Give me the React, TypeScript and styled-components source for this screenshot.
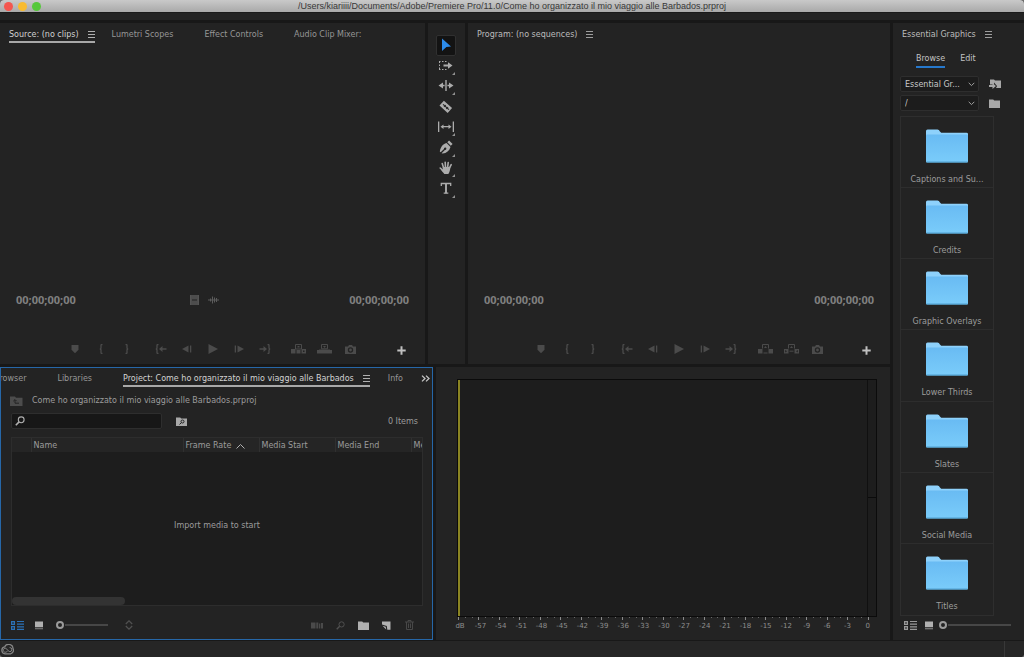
import React from 'react';
import styled, { createGlobalStyle, css } from 'styled-components';

const GlobalStyle = createGlobalStyle`
  *, *::before, *::after { box-sizing: border-box; }
  body {
    margin: 0;
    background: #6b6b6b;
    color: #9c9c9c;
    font-family: 'DejaVu Sans', sans-serif;
    font-size: 8px;
    font-weight: 400;
    line-height: 12px;
  }
  button, input, select { font: inherit; color: inherit; }
  svg { display: block; flex: none; }
`;

const Window = styled.div`
  display: flex;
  flex-direction: column;
  min-height: 100vh;
  background: #181818;
  border-radius: 4px;
  overflow: hidden;
`;

const TitleBar = styled.header`
  display: grid;
  grid-template-columns: 1fr auto 1fr;
  align-items: center;
  height: 12px;
  padding: 0 4px;
  background: linear-gradient(#c9c9c9, #a9a9a9);
  color: #383838;
`;

const Lights = styled.div`
  display: flex;
  gap: 5px;
`;

const Light = styled.button<{ $color: string }>`
  width: 9px;
  height: 9px;
  padding: 0;
  border: 0;
  border-radius: 50%;
  background: ${(p) => p.$color};
`;

const Title = styled.h1`
  margin: 0;
  font-family: 'Liberation Sans', sans-serif;
  font-size: 9px;
  font-weight: 400;
  line-height: 12px;
`;

const Strip = styled.div`
  height: 8px;
  margin-bottom: 3px;
  background: #232323;
  border-top: 1px solid #1a1a1a;
`;

const Workspace = styled.main`
  flex: 1;
  display: grid;
  grid-template-columns: 1fr 131px;
  gap: 3px;
  min-height: 0;
`;

const Area = styled.div`
  display: grid;
  grid-template-rows: 341fr 273fr;
  gap: 3px;
  min-width: 0;
`;

const TopRow = styled.div`
  display: grid;
  grid-template-columns: 425fr 37px 422fr;
  gap: 3px;
`;

const BottomRow = styled.div`
  display: grid;
  grid-template-columns: 433fr 454fr;
  gap: 3px;
`;

const Panel = styled.section`
  display: flex;
  flex-direction: column;
  min-width: 0;
  background: #232323;
`;

const TabBar = styled.nav`
  display: flex;
  gap: 16px;
  padding: 4px 9px 0;
`;

const Tab = styled.button<{ $active?: boolean }>`
  display: flex;
  align-items: center;
  gap: 9px;
  height: 16px;
  padding: 1px 0 0;
  border: 0;
  border-bottom: 2px solid ${(p) => (p.$active ? '#a8a8a8' : 'transparent')};
  background: none;
  color: ${(p) => (p.$active ? '#d2d2d2' : '#969696')};
  white-space: nowrap;
`;

const TitleTab = styled(Tab)`
  color: #bcbcbc;
`;

const SourceTabs = styled(TabBar)`
  gap: 31px;
  & > :first-child { margin-right: -14px; }
`;

const Stage = styled.div`
  flex: 1;
`;

const TimeRow = styled.div`
  display: flex;
  align-items: center;
  justify-content: space-between;
  height: 20px;
  padding: 0 16px;
  margin-bottom: 27px;
`;

const TimeCode = styled.span`
  color: #808080;
  font-family: 'Noto Sans', sans-serif;
  font-size: 11px;
  font-weight: 700;
  line-height: 20px;
`;

const DragIcons = styled.div`
  display: flex;
  align-items: center;
  gap: 9px;
  padding-right: 16px;
  color: #5c5c5c;
`;

const Transport = styled.div`
  display: grid;
  grid-template-columns: 1fr auto 1fr;
  align-items: center;
  height: 24px;
  margin-bottom: 3px;
  color: #4b4b4b;
`;

const TransportButtons = styled.div`
  grid-column: 2;
  display: flex;
  gap: 10px;
`;

const ButtonGroup = styled.div`
  display: flex;
  gap: 2px;
`;

const IconButton = styled.button<{ $w?: number; $color?: string }>`
  display: flex;
  align-items: center;
  justify-content: center;
  width: ${(p) => p.$w ?? 24}px;
  height: 18px;
  padding: 0;
  border: 0;
  background: none;
  color: ${(p) => p.$color ?? 'inherit'};
`;

const AddSlot = styled.div`
  display: flex;
  justify-content: flex-end;
  padding: 3px 12px 0 0;
`;

const ToolPanel = styled(Panel)`
  align-items: center;
  padding: 12px 1px 0 0;
`;

const ToolList = styled.div`
  display: grid;
  grid-auto-rows: 1fr;
  width: 20px;
  height: 164px;
`;

const Tool = styled.button<{ $active?: boolean }>`
  display: flex;
  align-items: center;
  justify-content: center;
  width: 20px;
  padding: 0;
  border: 1px solid ${(p) => (p.$active ? '#303030' : 'transparent')};
  border-radius: 2px;
  background: ${(p) => (p.$active ? '#131313' : 'none')};
  color: ${(p) => (p.$active ? '#2d8ceb' : '#acacac')};
`;

const ProjectPanel = styled(Panel)`
  border: 1px solid #2667a8;
`;

const ProjectTabs = styled.div`
  display: flex;
  align-items: flex-start;
  justify-content: space-between;
  height: 20px;
  padding: 3px 2px 0 0;
  overflow: hidden;
`;

const ProjectTabList = styled.nav`
  display: flex;
  gap: 31px;
  margin-left: -7px;
  & > :last-child { margin-left: -13px; }
`;

const MorePanels = styled.button`
  display: flex;
  align-items: center;
  height: 14px;
  padding: 0;
  border: 0;
  background: none;
  color: #c4c4c4;
`;

const Crumb = styled.div`
  display: flex;
  align-items: center;
  gap: 9px;
  height: 14px;
  margin-top: 6px;
  padding: 0 9px;
`;

const SearchRow = styled.div`
  display: flex;
  align-items: center;
  gap: 12px;
  height: 16px;
  margin-top: 5px;
  padding: 0 14px 0 10px;
`;

const fieldBox = css`
  border: 1px solid #2e2e2e;
  border-radius: 2px;
  background: #171717;
`;

const SearchBox = styled.label`
  ${fieldBox}
  display: flex;
  align-items: center;
  gap: 4px;
  width: 151px;
  height: 16px;
  padding: 0 3px;
  color: #b0b0b0;
`;

const SearchInput = styled.input`
  flex: 1;
  min-width: 0;
  padding: 0;
  border: 0;
  outline: 0;
  background: none;
`;

const ItemCount = styled.span`
  margin-left: auto;
  padding-top: 2px;
`;

const Bin = styled.div`
  flex: 1;
  display: flex;
  flex-direction: column;
  margin: 8px 9px 0 10px;
  border: 1px solid #2d2d2d;
  background: #1d1d1d;
  overflow: hidden;
`;

const BinTable = styled.table`
  width: 100%;
  table-layout: fixed;
  border-collapse: collapse;
  background: #252525;
`;

const Th = styled.th<{ $w?: number }>`
  width: ${(p) => (p.$w ? `${p.$w}px` : 'auto')};
  height: 14px;
  padding: 2px 0 0 2px;
  border-right: 1px solid #303030;
  font-weight: 400;
  text-align: left;
  white-space: nowrap;
  overflow: hidden;
  &:last-child { border-right: 0; }
`;

const SortLabel = styled.span`
  display: flex;
  align-items: center;
  gap: 5px;
`;

const EmptyNote = styled.div`
  flex: 1;
  display: flex;
  align-items: center;
  justify-content: center;
  padding-top: 2px;
`;

const ScrollThumb = styled.div`
  width: 113px;
  height: 8px;
  border-radius: 4px;
  background: #333333;
`;

const Footer = styled.div`
  display: flex;
  align-items: center;
  height: 20px;
  margin: 9px 13px 4px 8px;
`;

const FooterRight = styled.div`
  display: flex;
  gap: 3px;
  margin-left: auto;
`;

const Zoom = styled.input<{ $w: number }>`
  appearance: none;
  width: ${(p) => p.$w}px;
  height: 10px;
  margin: 0 0 0 4px;
  background: linear-gradient(#474747, #474747) right 4px / calc(100% - 9px) 2px no-repeat;
  &::-webkit-slider-thumb {
    appearance: none;
    width: 8px;
    height: 8px;
    border: 2px solid #9b9b9b;
    border-radius: 50%;
    background: transparent;
  }
`;

const MeterPanel = styled(Panel)`
  padding: 12px 13px 0 21px;
`;

const Meter = styled.div`
  flex: 1;
  display: grid;
  grid-template-columns: 1fr 8px;
  border: 1px solid #0b0b0b;
  background: #1d1d1d;
`;

const Level = styled.div`
  border-left: 2px solid #8a8422;
  border-right: 1px solid #101010;
`;

const Clip = styled.div`
  display: grid;
  grid-template-rows: 1fr 1fr;
  & > :first-child { border-bottom: 1px solid #0b0b0b; }
`;

const Ticks = styled.div`
  display: flex;
  justify-content: space-between;
  height: 4px;
  margin: 0 8px 0 1px;
`;

const Tick = styled.span<{ $major: boolean }>`
  width: 1px;
  height: ${(p) => (p.$major ? 3 : 1)}px;
  background: ${(p) => (p.$major ? '#8a8a8a' : '#6a6a6a')};
`;

const Scale = styled.div`
  display: flex;
  justify-content: space-between;
  height: 19px;
  margin: 0 9px 0 3px;
  font-size: 7px;
  line-height: 10px;
  color: #8f8f8f;
`;

const Mark = styled.span`
  display: flex;
  justify-content: center;
  width: 0;
  white-space: nowrap;
`;

const GraphicsBody = styled.div`
  flex: 1;
  display: flex;
  flex-direction: column;
  padding: 9px 13px 0 7px;
`;

const ModeTabs = styled.nav`
  display: flex;
  gap: 15px;
  padding-left: 16px;
`;

const ModeTab = styled.button<{ $active?: boolean }>`
  height: 16px;
  padding: 0;
  border: 0;
  border-bottom: 2px solid ${(p) => (p.$active ? '#2678cc' : 'transparent')};
  background: none;
  color: #c2c2c2;
`;

const Picker = styled.div`
  display: flex;
  align-items: center;
  gap: 10px;
  margin-top: 8px;
  color: #a8a8a8;
  & + & { margin-top: 3px; }
`;

const SelectBox = styled.div`
  ${fieldBox}
  display: grid;
  grid-template-columns: 1fr 10px;
  align-items: center;
  width: 79px;
  height: 16px;
  background: #1c1c1c;
`;

const Select = styled.select`
  appearance: none;
  grid-area: 1 / 1 / 2 / 3;
  width: 100%;
  height: 14px;
  padding: 1px 10px 0 4px;
  border: 0;
  outline: 0;
  background: none;
  color: #c8c8c8;
`;

const SelectArrow = styled.span`
  grid-area: 1 / 2 / 2 / 3;
  pointer-events: none;
`;

const FolderList = styled.ul`
  flex: 1;
  display: grid;
  grid-auto-rows: 1fr;
  width: 94px;
  margin: 5px 0 0;
  padding: 0;
  border: 1px solid #2e2e2e;
  list-style: none;
`;

const FolderItem = styled.li`
  display: flex;
  flex-direction: column;
  align-items: center;
  gap: 11px;
  padding-top: 12px;
  border-bottom: 1px solid #2d2d2d;
  white-space: nowrap;
  &:last-child { border-bottom: 0; }
`;

const GraphicsFooter = styled.div`
  display: flex;
  align-items: center;
  height: 18px;
  margin: 0 0 6px 5px;
`;

const StatusBar = styled.footer`
  display: flex;
  align-items: center;
  justify-content: space-between;
  height: 16px;
  margin-top: 1px;
  padding: 0 19px 0 1px;
  background: #262626;
  color: #858585;
`;

const StatusDivider = styled.span`
  width: 1px;
  height: 16px;
  background: #383838;
`;

/* ---------- icons ---------- */

const Menu = () => (
  <svg width="7" height="7" viewBox="0 0 7 7" fill="currentColor">
    <path d="M0 0h7v1H0zM0 3h7v1H0zM0 6h7v1H0z" opacity=".8" />
  </svg>
);

const Folder = ({ mark }: { mark?: React.ReactNode }) => (
  <svg width="11" height="9" viewBox="0 0 11 9" fill="currentColor">
    <path d="M0 .5h4.200l1 1H11V9H0z" />
    {mark}
  </svg>
);

const Magnifier = ({ size = 10 }: { size?: number }) => (
  <svg width={size} height={size} viewBox="0 0 10 10" fill="none" stroke="currentColor" strokeWidth="1.1">
    <circle cx="6.2" cy="3.8" r="2.9" />
    <path d="M4.1 5.900L.8 9.200" strokeWidth="1.6" />
  </svg>
);

const BigFolder = () => (
  <svg width="42" height="34" viewBox="0 0 42 34">
    <defs>
      <linearGradient id="folderFace" x1="0" y1="0" x2="0" y2="1">
        <stop offset="0" stopColor="#69bbf3" />
        <stop offset="1" stopColor="#7accfa" />
      </linearGradient>
    </defs>
    <path d="M0 2Q0 .5 1.5.5H11.500c2 0 2.500 3.300 4.500 3.300H40.500Q42 3.800 42 5V10H0z" fill="#8ed1fb" />
    <path d="M0 6.500Q0 5.500 1 5.500H41Q42 5.500 42 6.500V32.500Q42 33.500 41 33.500H1Q0 33.500 0 32.500z" fill="url(#folderFace)" />
    <path d="M.5 33H41.500" stroke="#4f9fd0" />
  </svg>
);

const ListView = () => (
  <svg width="13" height="9" viewBox="0 0 13 9" fill="currentColor">
    <path d="M0 0h4v4H0zM1.300 1.300v1.400h1.400V1.300zM0 5h4v4H0zM1.300 6.300v1.400h1.400V6.300z" fillRule="evenodd" />
    <path d="M6 0h7v1H6zM6 2.500h7v1.200H6zM6 5.200h7v1.200H6zM6 7.800h7V9H6z" />
  </svg>
);

const ThumbView = () => (
  <svg width="8" height="9" viewBox="0 0 8 9" fill="currentColor">
    <path d="M0 .5h8v5.700H0z" />
    <path d="M0 7.200h8v1.100H0z" opacity=".7" />
  </svg>
);

const Svg = ({ w = 16, h = 12, children }: { w?: number; h?: number; children: React.ReactNode }) => (
  <svg width={w} height={h} viewBox={`0 0 ${w} ${h}`} fill="currentColor">
    {children}
  </svg>
);

const marker = <Svg w={8} h={10}><path d="M.5 1h7v4.800L4 9.200.5 5.800z" /></Svg>;
const braceL = <Svg w={4} h={10}><path d="M3.500.5H2.800Q2 .5 2 1.400V3.800Q2 5 .8 5 2 5 2 6.200V8.600Q2 9.500 2.800 9.500H3.500" fill="none" stroke="currentColor" strokeWidth="1.300" /></Svg>;
const braceR = <Svg w={4} h={10}><path d="M.5.5H1.200Q2 .5 2 1.400V3.800Q2 5 3.200 5 2 5 2 6.200V8.600Q2 9.500 1.200 9.500H.5" fill="none" stroke="currentColor" strokeWidth="1.300" /></Svg>;
const goIn = (
  <Svg w={12} h={10}>
    <path d="M3.500.5H2.800Q2 .5 2 1.400V3.800Q2 5 .8 5 2 5 2 6.200V8.600Q2 9.500 2.800 9.500H3.500" fill="none" stroke="currentColor" strokeWidth="1.300" />
    <path d="M4 5l3.500-3v2.200H11.500v1.600H7.500V8z" />
  </Svg>
);
const goOut = (
  <Svg w={12} h={10}>
    <path d="M8.500.5H9.200Q10 .5 10 1.400V3.800Q10 5 11.200 5 10 5 10 6.200V8.600Q10 9.500 9.200 9.500H8.500" fill="none" stroke="currentColor" strokeWidth="1.300" />
    <path d="M8 5L4.500 2v2.200H.5v1.600h4V8z" />
  </Svg>
);
const stepBack = <Svg w={10} h={8}><path d="M0 4l6.500-3.500v7zM8 .5h1.300v7H8z" /></Svg>;
const play = <Svg w={10} h={10}><path d="M.5 0L10 5 .5 10z" /></Svg>;
const stepFwd = <Svg w={10} h={8}><path d="M10 4L3.500.5v7zM.7.5H2v7H.7z" /></Svg>;
const insert = (
  <Svg w={15} h={10}>
    <path d="M0 5h4.500v4.500H0z" />
    <path d="M4.500.5h6V5h-6z" fill="none" stroke="currentColor" />
    <path d="M6.500 2h2v1.500h-2zM5.500 6h4v3.500h-4zM10.500 5H15v4.500h-4.500zM12 6.500V8h1.500V6.500z" fillRule="evenodd" />
  </Svg>
);
const overwrite = (
  <Svg w={15} h={10}>
    <path d="M0 6h15v3.500H0z" />
    <path d="M4.500.5h6V4.800h-6z" fill="none" stroke="currentColor" />
    <path d="M6 2h3L7.500 4zM2 5h11v.6H2z" />
  </Svg>
);
const lift = (
  <Svg w={15} h={10}>
    <path d="M0 5h4.500v4.500H0zM10.500 5H15v4.500h-4.500z" />
    <path d="M4.500 4.500v-4h6v4" fill="none" stroke="currentColor" />
    <path d="M6 4l1.500-2L9 4zM5.500 8.500h4v1h-4z" />
  </Svg>
);
const extract = (
  <Svg w={15} h={10}>
    <path d="M0 5h4.500v4.500H0zM1.200 6v2.500L3 7.200zM10.500 5H15v4.500h-4.500zM13.800 6L12 7.200l1.800 1.300z" fillRule="evenodd" />
    <path d="M4.500 4.500v-4h6v4M5.500 7.200h4" fill="none" stroke="currentColor" />
    <path d="M6 4l1.500-2L9 4z" />
  </Svg>
);
const camera = (
  <Svg w={11} h={9}>
    <path d="M0 1.500h3L4 0h3l1 1.500h3V9H0zM5.500 2.300a2.700 2.700 0 100 5.400 2.700 2.700 0 000-5.400zM5.500 3.600a1.400 1.400 0 110 2.800 1.400 1.400 0 010-2.800z" fillRule="evenodd" />
  </Svg>
);
const plus = <Svg w={9} h={9}><path d="M3.500.3h2v3.200h3.200v2H5.500v3.200h-2V5.500H.3v-2h3.200z" /></Svg>;

const corner = <path d="M18 15v3h-3z" opacity=".8" />;
const ToolSvg = ({ children }: { children: React.ReactNode }) => (
  <svg width="18" height="18" viewBox="0 0 18 18" fill="currentColor">{children}</svg>
);

const tools: { name: string; icon: React.ReactNode }[] = [
  { name: 'Selection', icon: <ToolSvg><path d="M5 2.500l9 8-4.600.4L5 15z" /></ToolSvg> },
  {
    name: 'Track select',
    icon: (
      <ToolSvg>
        <path d="M2 4.500h8M2.500 4.500v8M2 12.500h8" fill="none" stroke="currentColor" strokeDasharray="1.500 1.500" />
        <path d="M6.500 7.500h4.500V5.200L15.500 8.500 11 11.800V9.500H6.500z" />
        {corner}
      </ToolSvg>
    ),
  },
  {
    name: 'Ripple edit',
    icon: (
      <ToolSvg>
        <path d="M8.300 3h1.400v11H8.300zM1.500 8.500L6 5.500v2.300h1.600v1.400H6v2.300zM16.500 8.500L12 5.500v2.300h-1.600v1.400H12v2.300z" />
        {corner}
      </ToolSvg>
    ),
  },
  {
    name: 'Razor',
    icon: (
      <ToolSvg>
        <g transform="rotate(42 9 9)">
          <path d="M3.200 5.700h11v6.600h-11zM5 8.400v1.200h2v.7h1V9.600h2v.7h1V9.600h2V8.400h-2V7.700h-1v.7H8V7.700H7v.7z" fillRule="evenodd" />
        </g>
      </ToolSvg>
    ),
  },
  {
    name: 'Slip',
    icon: (
      <ToolSvg>
        <path d="M1 3.500h1.300v10.500H1zM15.700 3.500H17v10.500h-1.300zM3.500 8.700l3-2.300v1.700h5V6.400l3 2.300-3 2.300V9.300h-5V11z" />
        {corner}
      </ToolSvg>
    ),
  },
  {
    name: 'Pen',
    icon: (
      <ToolSvg>
        <path d="M10.300 3.200l1.800-1.800 3.500 3.500-1.800 1.800zM9.500 4l4 4c-1.200 4-4 6-7.800 6.600l-1.100-.4 3.300-3.300a1.200 1.200 0 10-.9-.9L3.700 13.300l-.9-.9C3.700 8.200 5.500 5 9.500 4z" />
        {corner}
      </ToolSvg>
    ),
  },
  {
    name: 'Hand',
    icon: (
      <ToolSvg>
        <path d="M6.600 8.700L5.200 4.600M8.500 8.200L8.200 3.200M10.600 8.300L11.200 3.600M12.400 9.200L14.200 5.700M6 11.600L3.200 9" stroke="currentColor" strokeWidth="1.600" strokeLinecap="round" />
        <path d="M5.700 8h7.600c0 3.200-.8 5.300-2 7H7.300C6.500 13.600 4.800 12.300 4 10.500l1.700.7z" />
        {corner}
      </ToolSvg>
    ),
  },
  {
    name: 'Type',
    icon: (
      <ToolSvg>
        <path d="M4.300 6V3.500h9.400V6M6.700 13.200h4.600" fill="none" stroke="currentColor" strokeWidth="1.300" />
        <path d="M9 3.500v9.700" stroke="currentColor" strokeWidth="1.900" />
        {corner}
      </ToolSvg>
    ),
  },
];

const filmIcon = (
  <Svg w={9} h={10}>
    <path d="M0 0h9v10H0zM2 4.500v1h5v-1z" fillRule="evenodd" opacity=".75" />
    <path d="M0 0h1.200v10H0zM7.800 0H9v10H7.800z" opacity=".6" />
  </Svg>
);
const waveIcon = (
  <Svg w={11} h={8}>
    <path d="M0 3.600h11v.8H0zM2 2.500h1v3H2zM4 .5h1v7H4zM6 1.500h1v5H6zM8 2h1v4H8z" />
  </Svg>
);

type Control = { name: string; icon: React.ReactNode };
const startControls: Control[] = [
  { name: 'Add marker', icon: marker },
  { name: 'Mark in', icon: braceL },
  { name: 'Mark out', icon: braceR },
];
const playControls: Control[] = [
  { name: 'Go to in', icon: goIn },
  { name: 'Step back', icon: stepBack },
  { name: 'Play', icon: play },
  { name: 'Step forward', icon: stepFwd },
  { name: 'Go to out', icon: goOut },
];
const sourceEdit: Control[] = [
  { name: 'Insert', icon: insert },
  { name: 'Overwrite', icon: overwrite },
  { name: 'Export frame', icon: camera },
];
const programEdit: Control[] = [
  { name: 'Lift', icon: lift },
  { name: 'Extract', icon: extract },
  { name: 'Export frame', icon: camera },
];

const Monitor = ({ edit, extras }: { edit: Control[]; extras?: boolean }) => (
  <>
    <Stage />
    <TimeRow>
      <TimeCode>00;00;00;00</TimeCode>
      {extras && <DragIcons>{filmIcon}{waveIcon}</DragIcons>}
      <TimeCode>00;00;00;00</TimeCode>
    </TimeRow>
    <Transport>
      <TransportButtons>
        {[startControls, playControls, edit].map((group, i) => (
          <ButtonGroup key={i}>
            {group.map((c) => (
              <IconButton key={c.name} aria-label={c.name}>{c.icon}</IconButton>
            ))}
          </ButtonGroup>
        ))}
      </TransportButtons>
      <AddSlot>
        <IconButton aria-label="Button editor" $color="#c0c0c0">{plus}</IconButton>
      </AddSlot>
    </Transport>
  </>
);

const marks = ['dB', ...Array.from({ length: 19 }, (_, i) => `-${57 - i * 3}`), '0'];
const folders = ['Captions and Su...', 'Credits', 'Graphic Overlays', 'Lower Thirds', 'Slates', 'Social Media', 'Titles'];

const Dropdown = ({ label, value }: { label: string; value: string }) => (
  <SelectBox>
    <Select aria-label={label} defaultValue={value}>
      <option>{value}</option>
    </Select>
    <SelectArrow>
      <svg width="7" height="5" viewBox="0 0 7 5" fill="none" stroke="#a0a0a0">
        <path d="M.7.8l2.800 2.800L6.300.8" />
      </svg>
    </SelectArrow>
  </SelectBox>
);

export default function App() {
  return (
    <Window>
      <GlobalStyle />
      <TitleBar>
        <Lights>
          <Light $color="#f4564f" aria-label="Close" />
          <Light $color="#f9bb2f" aria-label="Minimize" />
          <Light $color="#56c83b" aria-label="Zoom" />
        </Lights>
        <Title>/Users/kiariiii/Documents/Adobe/Premiere Pro/11.0/Come ho organizzato il mio viaggio alle Barbados.prproj</Title>
      </TitleBar>
      <Strip />
      <Workspace>
        <Area>
          <TopRow>
            <Panel>
              <SourceTabs>
                <Tab $active>Source: (no clips) <Menu /></Tab>
                <Tab>Lumetri Scopes</Tab>
                <Tab>Effect Controls</Tab>
                <Tab>Audio Clip Mixer:</Tab>
              </SourceTabs>
              <Monitor edit={sourceEdit} extras />
            </Panel>
            <ToolPanel>
              <ToolList>
                {tools.map((t, i) => (
                  <Tool key={t.name} $active={i === 0} aria-label={t.name}>{t.icon}</Tool>
                ))}
              </ToolList>
            </ToolPanel>
            <Panel>
              <TabBar>
                <TitleTab>Program: (no sequences) <Menu /></TitleTab>
              </TabBar>
              <Monitor edit={programEdit} />
            </Panel>
          </TopRow>
          <BottomRow>
            <ProjectPanel>
              <ProjectTabs>
                <ProjectTabList>
                  <Tab>Browser</Tab>
                  <Tab>Libraries</Tab>
                  <Tab $active>Project: Come ho organizzato il mio viaggio alle Barbados <Menu /></Tab>
                  <Tab>Info</Tab>
                </ProjectTabList>
                <MorePanels aria-label="More panels">
                  <svg width="9" height="7" viewBox="0 0 9 7" fill="none" stroke="currentColor" strokeWidth="1.300">
                    <path d="M1 .6l3 2.900-3 2.900M5 .6l3 2.900-3 2.900" />
                  </svg>
                </MorePanels>
              </ProjectTabs>
              <Crumb>
                <svg width="13" height="10" viewBox="0 0 13 10" fill="#4c4c4c">
                  <path d="M0 .5h5l1 1.200h6.500V10H0z" />
                  <path d="M5 4v3.200h4M3.300 5.200L5 3.500l1.700 1.700" fill="none" stroke="#232323" />
                </svg>
                Come ho organizzato il mio viaggio alle Barbados.prproj
              </Crumb>
              <SearchRow>
                <SearchBox>
                  <Magnifier />
                  <SearchInput aria-label="Search project" />
                </SearchBox>
                <IconButton $w={14} aria-label="New search bin" $color="#a8a8a8">
                  <Folder
                    mark={
                      <g fill="none" stroke="#232323">
                        <circle cx="6.500" cy="4.500" r="1.500" />
                        <path d="M5.400 5.600L3.500 7.500" />
                      </g>
                    }
                  />
                </IconButton>
                <ItemCount>0 Items</ItemCount>
              </SearchRow>
              <Bin>
                <BinTable>
                  <thead>
                    <tr>
                      <Th $w={19} aria-label="Label" />
                      <Th $w={152}>Name</Th>
                      <Th $w={76}>
                        <SortLabel>
                          Frame Rate
                          <svg width="9" height="5" viewBox="0 0 9 5" fill="none" stroke="#b0b0b0">
                            <path d="M.5 4.500l4-4 4 4" />
                          </svg>
                        </SortLabel>
                      </Th>
                      <Th $w={76}>Media Start</Th>
                      <Th $w={76}>Media End</Th>
                      <Th>Media Duration</Th>
                    </tr>
                  </thead>
                </BinTable>
                <EmptyNote>Import media to start</EmptyNote>
                <ScrollThumb />
              </Bin>
              <Footer>
                <IconButton $w={16} aria-label="List view" $color="#2b72b8"><ListView /></IconButton>
                <IconButton $w={27} aria-label="Icon view" $color="#b0b0b0"><ThumbView /></IconButton>
                <Zoom $w={52} type="range" min={0} max={100} defaultValue={0} aria-label="Thumbnail size" />
                <IconButton $w={42} aria-label="Sort icons" $color="#505050">
                  <svg width="8" height="10" viewBox="0 0 8 10" fill="none" stroke="currentColor" strokeWidth="1.300">
                    <path d="M.8 4L4 .9 7.200 4M.8 6L4 9.100 7.200 6" />
                  </svg>
                </IconButton>
                <FooterRight>
                  <IconButton $w={20} aria-label="Automate to sequence" $color="#4a4a4a">
                    <svg width="12" height="7" viewBox="0 0 12 7" fill="currentColor">
                      <path d="M0 .5h4.500v6H0zM5.300.5h2v6h-2zM8 1.500h1.300v5H8zM10 1h2v5.500h-2z" />
                    </svg>
                  </IconButton>
                  <IconButton $w={20} aria-label="Find" $color="#505050"><Magnifier size={9} /></IconButton>
                  <IconButton $w={20} aria-label="New bin" $color="#b0b0b0"><Folder /></IconButton>
                  <IconButton $w={20} aria-label="New item" $color="#b0b0b0">
                    <svg width="9" height="9" viewBox="0 0 9 9" fill="currentColor">
                      <path d="M0 .5h8.500v8.200H5.300L4.800 5 0 3.500z" />
                      <path d="M.5 4.800l3.200 1 .5 2.700z" />
                    </svg>
                  </IconButton>
                  <IconButton $w={20} aria-label="Clear" $color="#484848">
                    <svg width="9" height="10" viewBox="0 0 9 10" fill="none" stroke="currentColor">
                      <path d="M0 2h9M3 2V.5h3V2M1.500 2v7.500h6V2M3.500 3.500v4.500M5.500 3.500v4.500" />
                    </svg>
                  </IconButton>
                </FooterRight>
              </Footer>
            </ProjectPanel>
            <MeterPanel aria-label="Audio meters">
              <Meter>
                <Level />
                <Clip><span /><span /></Clip>
              </Meter>
              <Ticks>
                {Array.from({ length: 61 }, (_, i) => <Tick key={i} $major={i % 3 === 0} />)}
              </Ticks>
              <Scale>
                {marks.map((m) => <Mark key={m}>{m}</Mark>)}
              </Scale>
            </MeterPanel>
          </BottomRow>
        </Area>
        <Panel>
          <TabBar>
            <TitleTab>Essential Graphics <Menu /></TitleTab>
          </TabBar>
          <GraphicsBody>
            <ModeTabs>
              <ModeTab $active>Browse</ModeTab>
              <ModeTab>Edit</ModeTab>
            </ModeTabs>
            <Picker>
              <Dropdown label="Library" value="Essential Gr..." />
              <svg width="12" height="10" viewBox="0 0 12 10" fill="currentColor">
                <path d="M1 .5h4l1 1h6V9H7l1-2-3-3.500v2H1z" />
                <path d="M0 6h3.500V4L7 7 3.500 10V8H0z" />
              </svg>
            </Picker>
            <Picker>
              <Dropdown label="Path" value="/" />
              <Folder />
            </Picker>
            <FolderList>
              {folders.map((f) => (
                <FolderItem key={f}><BigFolder />{f}</FolderItem>
              ))}
            </FolderList>
          </GraphicsBody>
          <GraphicsFooter>
            <IconButton $w={24} aria-label="List view" $color="#9a9a9a"><ListView /></IconButton>
            <IconButton $w={13} aria-label="Icon view" $color="#b0b0b0"><ThumbView /></IconButton>
            <Zoom $w={72} type="range" min={0} max={100} defaultValue={0} aria-label="Thumbnail size" />
          </GraphicsFooter>
        </Panel>
      </Workspace>
      <StatusBar>
        <svg width="13" height="11" viewBox="0 0 13 11" fill="none" stroke="currentColor" strokeWidth="1.300">
          <path d="M4 9.800A3.500 3.500 0 013.600 2.900 4.400 4.400 0 0112 4.500 3.600 3.600 0 019.500 9.800z" />
          <path d="M6.500 7.300L5.200 8A2 2 0 114.800 4.300L8.200 7.500A2 2 0 108.600 3.600" strokeWidth="1" />
        </svg>
        <StatusDivider />
      </StatusBar>
    </Window>
  );
}
